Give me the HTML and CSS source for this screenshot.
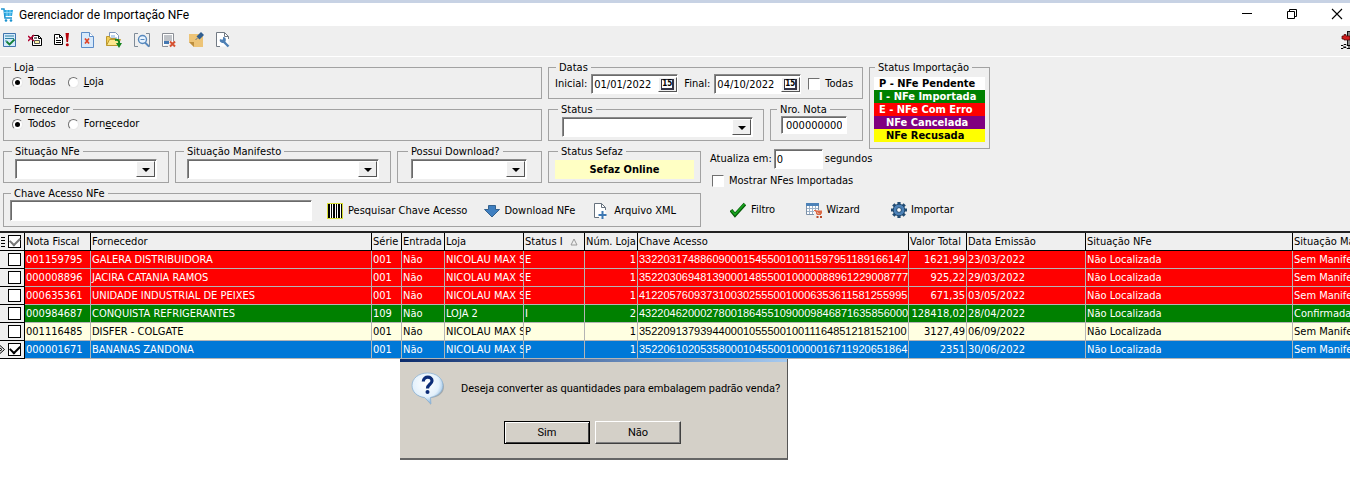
FILE: index.html
```
<!DOCTYPE html>
<html lang="pt-BR">
<head>
<meta charset="utf-8">
<title>Gerenciador de Importação NFe</title>
<link rel="stylesheet" href="styles.css">
</head>
<body>
<header class="titlebar">
  <svg class="app-icon" width="12" height="14" viewBox="0 0 12 14"><path d="M0 1h3l1 9h7" fill="none" stroke="#1c93cf" stroke-width="1.5"/><path d="M3 2h9l-1 6H4z" fill="#2fa8e0"/><path d="M3 4.500h9M6 2v6M9 2v6" stroke="#9bdcf7" stroke-width=".8"/><circle cx="5" cy="12.500" r="1.300" fill="#1c93cf"/><circle cx="10" cy="12.500" r="1.300" fill="#1c93cf"/></svg>
  <h1>Gerenciador de Importação NFe</h1>
  <div class="window-buttons">
    <button type="button" aria-label="Minimizar"><svg width="12" height="12" viewBox="0 0 12 12"><path d="M1 5.500h10" stroke="#000"/></svg></button>
    <button type="button" aria-label="Restaurar"><svg width="12" height="12" viewBox="0 0 12 12"><path d="M1.500 3.500h7v7h-7zM3.500 3V1.500h7v7H9" fill="none" stroke="#000"/></svg></button>
    <button type="button" aria-label="Fechar"><svg width="12" height="12" viewBox="0 0 12 12"><path d="M1 1l10 10M11 1L1 11" stroke="#000" stroke-width="1.100"/></svg></button>
  </div>
</header>

<nav class="toolbar" aria-label="Ferramentas">
  <div class="tools">
    <button type="button" aria-label="Selecionar"><svg viewBox="0 0 16 16"><path d="M1.500 1.500h12v13h-12z" fill="#d4eafc" stroke="#3f74ad"/><path d="M3 4h9M3 6.500h9M3 9h2" stroke="#2c83a3"/><path d="M4.500 9.500l3 3 5-5" fill="none" stroke="#15803a" stroke-width="1.800"/></svg></button>
    <button type="button" aria-label="Excluir nota"><svg viewBox="0 0 16 16"><path d="M4.500 13.500v-10h6l3 3v7z" fill="#fff" stroke="#000"/><path d="M10.500 3.500v3h3M6 6h3" fill="none" stroke="#000"/><path d="M6.500 8.500h5v3h-5z" fill="#fff5a5" stroke="#555"/><path d="M0 4l6 5M6 3L0 9" stroke="#b00030" stroke-width="1.500"/></svg></button>
    <button type="button" aria-label="Validar nota"><svg viewBox="0 0 16 16"><path d="M.5 12.500v-10h5l3 3v7z" fill="#fff" stroke="#000"/><path d="M5.500 2.500v3h3M2 6h2M2 8.500h5M2 10.500h5" fill="none" stroke="#000"/><path d="M11.500 1h3.500l-1 9h-1.500z" fill="#b80008"/><circle cx="13.300" cy="12.700" r="1.500" fill="#b80008"/></svg></button>
    <button type="button" aria-label="Cancelar"><svg viewBox="0 0 16 16"><path d="M1.500.5h8l4 4v11h-12z" fill="#d7e9fb" stroke="#5b8cc8"/><path d="M9.500.5v4h4" fill="#fff" stroke="#5b8cc8"/><path d="M5 6.500l4 5M9 6.500l-4 5" stroke="#e04428" stroke-width="1.700"/></svg></button>
    <button type="button" aria-label="Abrir"><svg viewBox="0 0 16 16"><path d="M3.500.5h6l3 3v8h-9z" fill="#fff" stroke="#7e94b9"/><path d="M5 4h4M5 6h6" stroke="#78a4d7"/><path d="M.5 13.500v-9h3l1 2h5v2" fill="#f3ce58" stroke="#bc982e"/><path d="M.5 13.500l3-6h11l-3 6z" fill="#fce891" stroke="#bc982e"/><path d="M9 8q5-1 4 4" fill="none" stroke="#16841e" stroke-width="2"/><path d="M10 11h6l-3 5z" fill="#16841e"/></svg></button>
  </div>
  <div class="tools">
    <button type="button" aria-label="Visualizar"><svg viewBox="0 0 16 16"><path d="M4 14.500H.5v-13H4M12 1.500h3.500v13H14" fill="none" stroke="#7f8b98"/><circle cx="8.500" cy="7.500" r="4" fill="#e7f3ff" stroke="#5688bd" stroke-width="1.400"/><path d="M6.500 7.500h4" stroke="#5688bd"/><path d="M11 10.500l4 4" stroke="#5688bd" stroke-width="1.800"/></svg></button>
    <button type="button" aria-label="Remover item"><svg viewBox="0 0 16 16"><path d="M1.500 14.500v-13h11v8M1.500 14.500H7" fill="#fff" stroke="#8b8f96"/><path d="M3 4h8M3 6h8M3 8h8" stroke="#808791"/><path d="M3 9h5v3H3z" fill="#4478b2"/><path d="M9 9.500l5 5M14 9.500l-5 5" stroke="#d65232" stroke-width="2"/></svg></button>
    <button type="button" aria-label="Anotação"><svg viewBox="0 0 16 16"><path d="M1 2h14v13H6l-5-5z" fill="#edc477"/><path d="M1 10h5v5z" fill="#bd8e3d"/><path d="M7.500 8l2-2" stroke="#6c7885"/><path d="M8.500 4.500L13 0l3 3-4.500 4.500z" fill="#315f91"/></svg></button>
    <button type="button" aria-label="Configurar"><svg viewBox="0 0 16 16"><path d="M1.500 14.500V.5h8l4 4v10z" fill="#fff"/><path d="M5 14.500H1.500V.5h8l4 4V7M9.500.5v4h4" fill="none" stroke="#727a84"/><path d="M8.500 9.500l5 5" stroke="#4e80b5" stroke-width="2.400"/><path d="M5 7a3 3 0 1 0 3-2v2.500H6z" fill="#4e80b5"/></svg></button>
  </div>
  <button type="button" class="exit" aria-label="Sair"><svg viewBox="0 0 9 18"><path d="M6 0h3v14H6z" fill="#858585"/><path d="M6.500 0v14M6 .5h3" stroke="#111"/><path d="M1 5h2V3.500h2V5h4v4H3V8H1z" fill="#d01c1c" stroke="#400" stroke-width=".7"/><path d="M0 14.500h2l1-1h2l1 1h3M0 17.500h2l1-1h2l1 1h3M2 16h3M7 16h2" fill="none" stroke="#000"/></svg></button>
</nav>

<form class="filters">
  <fieldset class="group loja">
    <legend>Loja</legend>
    <div class="radios">
      <label><input type="radio" name="loja" checked>Todas</label>
      <label><input type="radio" name="loja"><span><u>L</u>oja</span></label>
    </div>
  </fieldset>
  <fieldset class="group datas">
    <legend>Datas</legend>
    <div class="date-row">
      <label for="ini">Inicial:</label>
      <span class="date"><input type="text" id="ini" value="01/01/2022"><button type="button" aria-label="Calendário inicial"><span>15</span></button></span>
      <label for="fim" class="end">Final:</label>
      <span class="date"><input type="text" id="fim" value="04/10/2022"><button type="button" aria-label="Calendário final"><span>15</span></button></span>
      <label class="check"><input type="checkbox">Todas</label>
    </div>
  </fieldset>
  <fieldset class="group legenda">
    <legend>Status Importação</legend>
    <ul>
      <li class="pendente">P - NFe Pendente</li>
      <li class="importada">I - NFe Importada</li>
      <li class="erro">E - NFe Com Erro</li>
      <li class="cancelada">NFe Cancelada</li>
      <li class="recusada">NFe Recusada</li>
    </ul>
  </fieldset>

  <fieldset class="group fornecedor">
    <legend>Fornecedor</legend>
    <div class="radios">
      <label><input type="radio" name="forn" checked>Todos</label>
      <label><input type="radio" name="forn"><span>Forn<u>e</u>cedor</span></label>
    </div>
  </fieldset>
  <div class="status-row">
    <fieldset class="group">
      <legend>Status</legend>
      <div class="combo"><select aria-label="Status"><option></option></select></div>
    </fieldset>
    <fieldset class="group">
      <legend>Nro. Nota</legend>
      <input class="field nota" type="text" aria-label="Nro. Nota" value="000000000">
    </fieldset>
  </div>

  <div class="combos-row">
    <fieldset class="group">
      <legend>Situação NFe</legend>
      <div class="combo"><select aria-label="Situação NFe"><option></option></select></div>
    </fieldset>
    <fieldset class="group">
      <legend>Situação Manifesto</legend>
      <div class="combo"><select aria-label="Situação Manifesto"><option></option></select></div>
    </fieldset>
    <fieldset class="group">
      <legend>Possui Download?</legend>
      <div class="combo"><select aria-label="Possui Download?"><option></option></select></div>
    </fieldset>
  </div>
  <fieldset class="group sefaz">
    <legend>Status Sefaz</legend>
    <output>Sefaz Online</output>
  </fieldset>
  <div class="refresh">
    <div class="seconds"><label for="seg">Atualiza em:</label><input class="field" type="text" id="seg" value="0"><span>segundos</span></div>
    <label class="check"><input type="checkbox">Mostrar NFes Importadas</label>
  </div>

  <fieldset class="group chave">
    <legend>Chave Acesso NFe</legend>
    <div class="key-row">
      <input class="field key" type="text" aria-label="Chave Acesso NFe">
      <button type="button" class="action"><svg width="16" height="16" viewBox="0 0 16 16"><path d="M0 0h16v16H0z" fill="#d9de38"/><path d="M1 1h14v14H1z" fill="#fff"/><path d="M1 1h2v14H1zM4 1h1v14H4zM6 1h2v14H6zM9 1h1v14H9zM11 1h2v14h-2zM14 1h1v14h-1z" fill="#000"/></svg>Pesquisar Chave Acesso</button>
      <button type="button" class="action"><svg width="16" height="16" viewBox="0 0 16 16"><path d="M4.500 2.500h7v4h4L8 14 .5 6.500h4z" fill="#3f7fc0" stroke="#34628f"/></svg>Download NFe</button>
      <button type="button" class="action file"><svg width="16" height="16" viewBox="0 0 16 16"><path d="M2.500 14.500V.5h7l4 4v10z" fill="#fff"/><path d="M7 14.500H2.500V.5h7l4 4V7M9.500.5v4h4" fill="none" stroke="#66717d"/><path d="M10.500 8v8M6.500 12h8" stroke="#3d78b3" stroke-width="2"/></svg>Arquivo XML</button>
    </div>
  </fieldset>
  <div class="actions">
    <button type="button" class="action"><svg width="16" height="16" viewBox="0 0 16 16"><path d="M1 8l4 5L15 2" fill="none" stroke="#075c0a" stroke-width="3.600"/><path d="M1.500 8.500L5 12.500 14.500 2" fill="none" stroke="#18a51f" stroke-width="1.800"/></svg>Filtro</button>
    <button type="button" class="action wizard"><svg width="16" height="16" viewBox="0 0 16 16"><path d="M.5 1.500h12v11H.5z" fill="#fff" stroke="#7c91a9"/><path d="M0 1h13v3H0z" fill="#4d82b8"/><path d="M1 6.500h11M1 9.500h11M3.500 4v8M6.500 4v8M9.500 4v8" stroke="#9db2c8"/><path d="M8 8h8v6H8z" fill="#efefef"/><path d="M8 8.500h2l1 4h4M10 9h6l-1 3h-4z" fill="#dc6944" stroke="#dc6944"/><path d="M10.500 14h2v2h-2zM14 14h2v2h-2z" fill="#b54a2b"/></svg>Wizard</button>
    <button type="button" class="action"><svg width="16" height="16" viewBox="0 0 16 16"><path d="M8 0v16M0 8h16M2.300 2.300l11.400 11.400M13.700 2.300L2.300 13.700" stroke="#224c73" stroke-width="3.200"/><circle cx="8" cy="8" r="5.800" fill="#4d82b8" stroke="#224c73"/><circle cx="8" cy="8" r="2.400" fill="#fff" stroke="#224c73"/></svg>Importar</button>
  </div>
</form>

<main class="grid-area">
  <table class="notes">
    <colgroup><col class="c-sel"><col class="c-nota"><col class="c-forn"><col class="c-serie"><col class="c-ent"><col class="c-loja"><col class="c-stat"><col class="c-num"><col class="c-chave"><col class="c-valor"><col class="c-data"><col class="c-sit"><col class="c-man"></colgroup>
    <thead>
      <tr><th><div class="mark"><svg width="5" height="10" viewBox="0 0 5 10"><path d="M1 .5h4M1 3.500h4M1 6.500h4M1 9.500h4" stroke="#000"/></svg><input type="checkbox" class="all" aria-label="Selecionar todas" checked></div></th><th>Nota Fiscal</th><th>Fornecedor</th><th>Série</th><th>Entrada</th><th>Loja</th><th><div class="sorted"><span>Status I</span><svg width="8" height="8" viewBox="0 0 8 8"><path d="M4 1L7 7H1z" fill="none" stroke="#999"/></svg></div></th><th>Núm. Loja</th><th>Chave Acesso</th><th>Valor Total</th><th>Data Emissão</th><th>Situação NFe</th><th>Situação Manifesto</th></tr>
    </thead>
    <tbody>
      <tr class="erro"><td><div class="mark"><input type="checkbox" aria-label="Selecionar 001159795"></div></td><td>001159795</td><td>GALERA DISTRIBUIDORA</td><td>001</td><td>Não</td><td>NICOLAU MAX S</td><td>E</td><td class="num">1</td><td class="key-cell">33220317488609000154550010011597951189166147</td><td class="num">1621,99</td><td>23/03/2022</td><td>Não Localizada</td><td>Sem Manifesto</td></tr>
      <tr class="erro"><td><div class="mark"><input type="checkbox" aria-label="Selecionar 000008896"></div></td><td>000008896</td><td>JACIRA CATANIA RAMOS</td><td>001</td><td>Não</td><td>NICOLAU MAX S</td><td>E</td><td class="num">1</td><td class="key-cell">35220306948139000148550010000088961229008777</td><td class="num">925,22</td><td>29/03/2022</td><td>Não Localizada</td><td>Sem Manifesto</td></tr>
      <tr class="erro"><td><div class="mark"><input type="checkbox" aria-label="Selecionar 000635361"></div></td><td>000635361</td><td>UNIDADE INDUSTRIAL DE PEIXES</td><td>001</td><td>Não</td><td>NICOLAU MAX S</td><td>E</td><td class="num">1</td><td class="key-cell">41220576093731003025550010006353611581255995</td><td class="num">671,35</td><td>03/05/2022</td><td>Não Localizada</td><td>Sem Manifesto</td></tr>
      <tr class="importada"><td><div class="mark"><input type="checkbox" aria-label="Selecionar 000984687"></div></td><td>000984687</td><td>CONQUISTA REFRIGERANTES</td><td>109</td><td>Não</td><td>LOJA 2</td><td>I</td><td class="num">2</td><td class="key-cell">43220462000278001864551090009846871635856000</td><td class="num">128418,02</td><td>28/04/2022</td><td>Não Localizada</td><td>Confirmada</td></tr>
      <tr class="aberta"><td><div class="mark"><input type="checkbox" aria-label="Selecionar 001116485"></div></td><td>001116485</td><td>DISFER - COLGATE</td><td>001</td><td>Não</td><td>NICOLAU MAX S</td><td>P</td><td class="num">1</td><td class="key-cell">35220913793944000105550010011164851218152100</td><td class="num">3127,49</td><td>06/09/2022</td><td>Não Localizada</td><td>Sem Manifesto</td></tr>
      <tr class="atual"><td><div class="mark"><svg width="5" height="9" viewBox="0 0 5 9"><path d="M0 .5L4.500 4.500 0 8.500M0 3l2 1.500L0 6" fill="none" stroke="#000"/></svg><input type="checkbox" aria-label="Selecionar 000001671" checked></div></td><td>000001671</td><td>BANANAS ZANDONA</td><td>001</td><td>Não</td><td>NICOLAU MAX S</td><td>P</td><td class="num">1</td><td class="key-cell">35220610205358000104550010000016711920651864</td><td class="num">2351</td><td>30/06/2022</td><td>Não Localizada</td><td>Sem Manifesto</td></tr>
    </tbody>
  </table>

  <section class="dialog" role="dialog" aria-labelledby="pergunta">
    <div class="question">
      <svg width="34" height="34" viewBox="0 0 34 34"><defs><radialGradient id="bolha" cx=".45" cy=".35" r=".65"><stop offset="0" stop-color="#fff"/><stop offset=".65" stop-color="#e4f1fc"/><stop offset="1" stop-color="#83b2dc"/></radialGradient></defs><path d="M17 3C8 3 2 8 2 14.500S7 25 14 26l6 7v-7c8-1 13-5 13-11.500S26 3 17 3z" fill="#7c8894" opacity=".55"/><path d="M16.500 1C7.500 1 1 6.500 1 13.500 1 20 6 24.500 13.500 25.500L20 32l-.5-6.500C27 24 32 19.500 32 13.500 32 6.500 25.500 1 16.500 1z" fill="url(#bolha)" stroke="#8eb4d6" stroke-width=".8"/><path d="M12.300 9.500c.2-6 9-5.500 8.700-.5-.2 3.300-4.500 3.500-4.500 7.500" fill="none" stroke="#0c2c77" stroke-width="3.200"/><circle cx="16.500" cy="20" r="2" fill="#0c2c77"/></svg>
      <p id="pergunta">Deseja converter as quantidades para embalagem padrão venda?</p>
    </div>
    <div class="answers">
      <button type="button" class="default">Sim</button>
      <button type="button">Não</button>
    </div>
  </section>
</main>
</body>
</html>
```
FILE: styles.css
```
* { box-sizing: border-box; }

body {
  margin: 0;
  min-height: 100vh;
  overflow-x: hidden;
  display: flex;
  flex-direction: column;
  background: #fff;
  color: #000;
  font: 11px/14px "DejaVu Sans Condensed", "Noto Sans", sans-serif;
}

button, input, select, output { font: inherit; color: inherit; }
button { padding: 0; border: 0; background: none; }
svg { display: block; flex: none; }

/* Title bar */
.titlebar {
  display: flex;
  align-items: center;
  gap: 6px;
  height: 26px;
  border-top: 3px solid #c7d2e4;
}
.titlebar h1 { margin: 0; font: 12px/16px Roboto, "Noto Sans", sans-serif; }
.app-icon { margin-left: 1px; }
.window-buttons { display: flex; gap: 33px; margin-left: auto; padding: 0 7px 2px 0; }

/* Toolbar */
.toolbar {
  display: flex;
  align-items: center;
  gap: 12px;
  height: 31px;
  padding: 0 0 2px 2px;
  background: #efefef;
  border-bottom: 1px solid #fff;
}
.tools { display: flex; gap: 10px; }
.tools + .tools { gap: 11px; }
.tools svg { width: 16px; height: 16px; }
.exit { margin-left: auto; }
.exit svg { width: 9px; height: 18px; }

/* Filters */
.filters {
  display: grid;
  grid-template-columns: 539px 153px 156px 121px;
  grid-template-rows: 38px 38px 38px 40px;
  gap: 4px 6px;
  padding: 4px 3px;
  background: #efefef;
}
.group {
  min-width: 0;
  margin: 0;
  padding: 0 6px;
  border: 1px solid #a2a2a2;
}
.group legend { margin-left: 1px; padding: 0 3px; line-height: 13px; }
.datas { grid-column: 2 / 4; }
.legenda { grid-column: 4; grid-row: 1 / 3; height: 88px; padding: 0 4px; }
.fornecedor { grid-column: 1; }
.status-row { grid-column: 2 / 4; display: grid; grid-template-columns: 216px 1fr; gap: 6px; }
.status-row .group { padding: 0 10px; }
.status-row .group:first-child { padding: 0 10px 0 13px; }
.status-row .group legend { margin-left: -4px; }
.combos-row { grid-column: 1; display: grid; grid-template-columns: 166px 216px 1fr; gap: 6px; }
.combos-row .group { padding: 0 11px; }
.combos-row .group legend { margin-left: -3px; }
.combos-row .group:last-child { padding: 0 14px 0 13px; }
.sefaz legend { margin-left: 3px; }
.refresh { grid-column: 3 / 5; }
.chave { grid-column: 1 / 3; }
.actions { grid-column: 3 / 5; }

.radios { display: flex; gap: 12px; padding: 1px 0 0 2px; }
.radios label, .check { display: flex; align-items: center; gap: 5px; }
input[type="radio"], input[type="checkbox"] { appearance: none; flex: none; margin: 0; }
input[type="radio"] {
  display: grid;
  place-items: center;
  width: 11px;
  height: 11px;
  border: 1px solid;
  border-color: #707070 #e8e8e8 #e8e8e8 #707070;
  border-radius: 50%;
  background: #fff;
}
input[type="radio"]:checked::before {
  content: "";
  width: 5px;
  height: 5px;
  border-radius: 50%;
  background: #000;
}
.check input {
  width: 12px;
  height: 12px;
  border: 1px solid;
  border-color: #707070 #fff #fff #707070;
  background: #fff;
}

.field, .date, .combo {
  border: 1px solid;
  border-color: #8a8a8a #fff #fff #8a8a8a;
  box-shadow: inset 1px 1px #6a6a6a;
  background: #fff;
}
.date-row { display: flex; align-items: center; gap: 4px; }
.date-row .end { margin-left: 2px; }
.date { display: flex; width: 87px; height: 20px; padding: 2px 1px 1px 2px; }
.date input { width: 64px; padding: 0; border: 0; outline: 0; background: none; }
.date button {
  width: 20px;
  background: #efefef;
  border: 1px solid;
  border-color: #fff #555 #555 #fff;
}
.date button span {
  display: block;
  margin: 0 2px;
  border: 1px solid #334;
  border-width: 1px 2px 2px 1px;
  background: #fff;
  color: #000;
  font-size: 8px;
  font-weight: bold;
  line-height: 8px;
}
.date-row .check { margin-left: 3px; }

.combo { position: relative; height: 20px; margin-top: 1px; }
.combo select {
  display: block;
  appearance: none;
  width: 100%;
  height: 100%;
  padding: 0 20px 0 4px;
  border: 0;
  background: none;
}
.combo::before {
  content: "";
  position: absolute;
  inset: 1px 1px 1px auto;
  width: 17px;
  background: #efefef;
  border: 1px solid;
  border-color: #fff #555 #555 #fff;
  pointer-events: none;
}
.combo::after {
  content: "";
  position: absolute;
  right: 6px;
  top: 8px;
  border: 4px solid transparent;
  border-top-color: #000;
  border-bottom: 0;
  pointer-events: none;
}
.nota { display: block; width: 66px; height: 18px; padding: 0 4px; }

.legenda ul { margin: 3px 0 0; padding: 0; list-style: none; font-weight: bold; }
.legenda li { padding-left: 5px; line-height: 13px; white-space: nowrap; }
.pendente { background: #fff; }
.importada { background: #008000; color: #fff; }
.erro { background: #f00; color: #fff; }
.cancelada { background: #800080; color: #fff; }
.recusada { background: #ff0; }
.legenda .cancelada, .legenda .recusada { padding-left: 12px; }

.sefaz output {
  display: block;
  margin-top: 2px;
  background: #ffffc4;
  font-weight: bold;
  line-height: 19px;
  text-align: center;
}
.refresh { display: flex; flex-direction: column; gap: 5px; padding: 4px 0 0 3px; }
.seconds { display: flex; align-items: center; gap: 2px; }
.seconds .field { width: 49px; height: 20px; padding: 0 2px; }
.refresh .check { padding-left: 2px; }

.key-row { display: flex; align-items: center; }
.key { width: 302px; height: 21px; margin-right: 15px; }
.action { display: flex; align-items: center; gap: 5px; margin-right: 17px; white-space: nowrap; }
.action + .action svg { margin-right: -1px; }
.action.file { gap: 7px; margin-right: 0; }
.actions { display: flex; align-items: center; padding: 6px 0 0 23px; }
.actions .action { gap: 5px; margin-right: 31px; }

/* Grid */
.grid-area { flex: 1; overflow: hidden; }
.notes {
  table-layout: fixed;
  width: 1393px;
  border-collapse: separate;
  border-spacing: 0;
  border-top: 2px solid #222;
}
.c-sel { width: 25px; }
.c-nota { width: 66px; }
.c-forn { width: 281px; }
.c-serie { width: 30px; }
.c-ent { width: 43px; }
.c-loja { width: 79px; }
.c-stat { width: 61px; }
.c-num { width: 53px; }
.c-chave { width: 271px; }
.c-valor { width: 58px; }
.c-data { width: 119px; }
.c-sit { width: 207px; }
.c-man { width: 100px; }
.notes th, .notes td {
  height: 18px;
  padding: 0 1px;
  border-right: 1px solid #b4b4b4;
  border-bottom: 1px solid #b4b4b4;
  font-weight: normal;
  line-height: 17px;
  text-align: left;
  white-space: nowrap;
  overflow: hidden;
}
.notes th { background: #efefef; border-color: #000; }
.notes td:first-child { background: #efefef; border-color: #000; }
.notes .num { text-align: right; }
.notes .key-cell { font-family: "Liberation Sans", Arial, sans-serif; }
.aberta { background: #ffffe1; }
.atual { background: #0078d7; color: #fff; }
.mark { display: flex; align-items: center; justify-content: flex-end; gap: 1px; padding-right: 2px; color: #000; }
.mark svg:first-child { margin-right: auto; margin-left: -1px; }
.mark input {
  display: grid;
  place-items: center;
  width: 13px;
  height: 13px;
  border: 1px solid #000;
  background: #fff;
}
.mark input:checked::before {
  content: "";
  width: 8px;
  height: 5px;
  border: 2px solid #000;
  border-width: 0 0 2px 2px;
  rotate: -45deg;
  translate: 0 -1px;
}
.mark .all:checked::before { border-color: #777; }
.sorted { display: flex; align-items: center; justify-content: space-between; padding-right: 5px; }
.sorted span { width: 39px; overflow: hidden; }

/* Confirmation dialog */
.dialog {
  display: flex;
  flex-direction: column;
  gap: 15px;
  width: 388px;
  height: 101px;
  margin-left: 400px;
  padding: 13px 10px 0 11px;
  background: linear-gradient(90deg, #0c2c6c, #a6caf0) top / 100% 3px no-repeat #d4d0c8;
  border-right: 1px solid #555;
  border-bottom: 2px solid #666;
  font-family: Roboto, "Noto Sans", sans-serif;
}
.question { display: flex; align-items: center; gap: 16px; }
.question p { margin: 0; white-space: nowrap; }
.answers { display: flex; gap: 5px; padding-left: 93px; }
.answers button {
  width: 86px;
  height: 23px;
  background: #d4d0c8;
  border: 1px solid;
  border-color: #fff #404040 #404040 #fff;
  box-shadow: inset -1px -1px #808080;
}
.answers .default {
  border-color: #000;
  box-shadow: inset 1px 1px #fff, inset -1px -1px #404040;
}
```
